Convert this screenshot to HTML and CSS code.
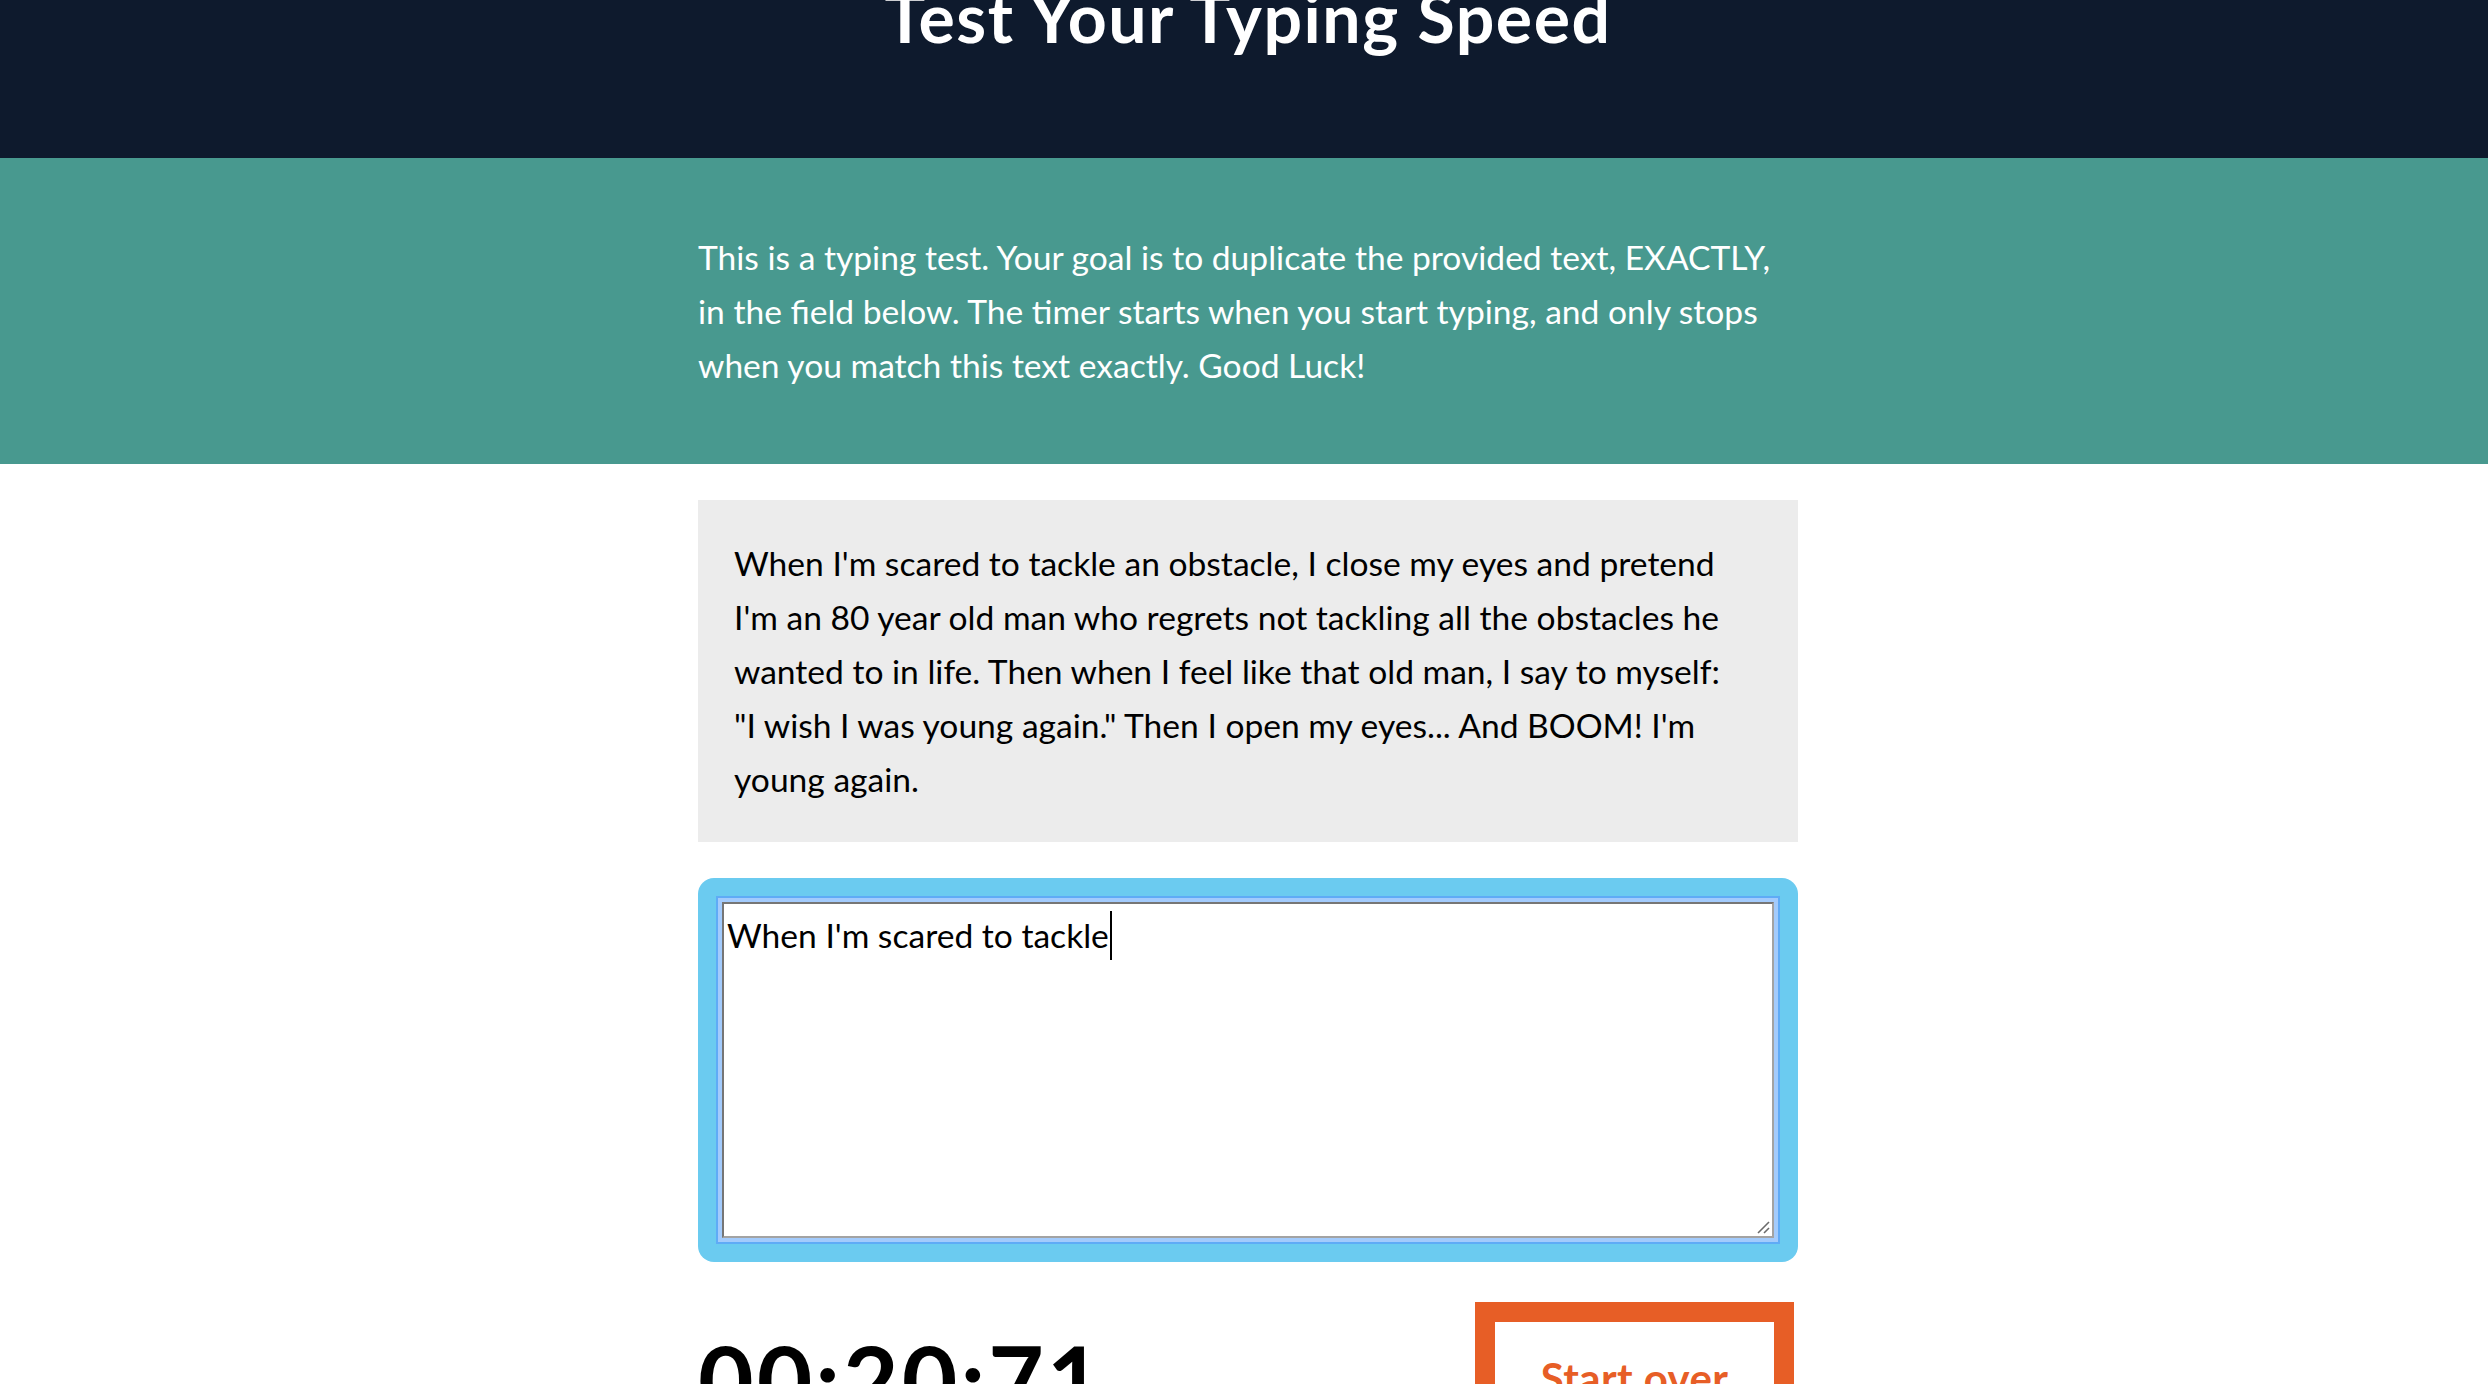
FILE: index.html
```html
<!DOCTYPE html>
<html lang="en">
<head>
<meta charset="utf-8">
<title>Test Your Typing Speed</title>
<link rel="stylesheet" href="styles.css">
</head>
<body>
<header class="masthead">
  <div class="inner">
    <h1 class="title">Test Your Typing Speed</h1>
  </div>
</header>
<section class="intro">
  <div class="inner">
    <p class="intro-text">This is a typing test. Your goal is to duplicate the provided text, EXACTLY, in the field below. The timer starts when you start typing, and only stops when you match this text exactly. Good Luck!</p>
  </div>
</section>
<main class="main">
  <div class="inner">
    <div class="origin-text">
      <p>When I'm scared to tackle an obstacle, I close my eyes and pretend I'm an 80 year old man who regrets not tackling all the obstacles he wanted to in life. Then when I feel like that old man, I say to myself: "I wish I was young again." Then I open my eyes... And BOOM! I'm young again.</p>
    </div>
    <div class="test-wrapper">
      <div class="test-area" role="textbox" aria-multiline="true"><span class="typed">When I'm scared to tackle</span><span class="caret"></span>
        <svg class="grip" width="14" height="14" viewBox="0 0 14 14" aria-hidden="true">
          <line x1="2" y1="13" x2="13" y2="2" stroke="#6b6b6b" stroke-width="1.6"/>
          <line x1="8" y1="13" x2="13" y2="8" stroke="#6b6b6b" stroke-width="1.6"/>
        </svg>
      </div>
    </div>
    <div class="meta">
      <div class="timer">00:20:71</div>
      <button class="reset" type="button">Start over</button>
    </div>
  </div>
</main>
</body>
</html>
```
FILE: styles.css
```css
html, body {
  margin: 0;
  padding: 0;
  background: #ffffff;
}

body {
  font-family: "Lato", "Noto Sans", sans-serif;
  color: #000;
  overflow: hidden;
  height: 1384px;
}

.inner {
  width: 1100px;
  margin: 0 auto;
}

.masthead,
.intro,
.main {
  padding-left: 8px;
}

/* Header */
.masthead {
  display: flow-root;
  background: #0e1a2d;
  height: 158px;
  box-sizing: border-box;
}

.masthead .inner {
  display: flow-root;
}

.title {
  margin: -17px 0 0;
  font-size: 68px;
  line-height: 68px;
  font-weight: 700;
  letter-spacing: 1.5px;
  color: #ffffff;
  text-align: center;
}

/* Intro */
.intro {
  background: #48998f;
  padding-top: 72px;
  padding-bottom: 72px;
}

.intro-text {
  margin: 0;
  color: #ffffff;
  font-size: 33.6px;
  line-height: 54px;
}

/* Main */
.main {
  padding-top: 36px;
}

.origin-text {
  background: #ececec;
  padding: 36px 60px 36px 36px;
}

.origin-text p {
  margin: 0;
  font-size: 33.6px;
  line-height: 54px;
  color: #000;
}

.test-wrapper {
  margin-top: 36px;
  background: #6bcbf0;
  border-radius: 16px;
  padding: 24px;
}

.test-area {
  position: relative;
  height: 336px;
  box-sizing: border-box;
  background: #ffffff;
  border-style: solid;
  border-width: 2px;
  border-color: #767676 #a3a3a3 #a3a3a3 #767676;
  box-shadow: 0 0 0 4px #a3cbfc, 0 0 0 6px #5fabf6;
  padding: 4px 3px;
  font-size: 33.6px;
  line-height: 54px;
  color: #000;
}

.caret {
  display: inline-block;
  width: 2px;
  height: 49px;
  background: #000;
  vertical-align: -12px;
  margin-left: 1px;
}

.grip {
  position: absolute;
  right: 2px;
  bottom: 2px;
}

.meta {
  display: flex;
  justify-content: space-between;
  align-items: flex-start;
  margin-top: 40px;
}

.timer {
  margin-top: 29px;
  font-size: 96px;
  line-height: 96px;
  font-weight: 700;
  letter-spacing: 3px;
  color: #000;
}

.reset {
  width: 319px;
  margin: 0 4px 0 0;
  padding: 25px 20px;
  border: 20px solid #e75e26;
  background: #ffffff;
  color: #e75e26;
  font-family: "Lato", "Noto Sans", sans-serif;
  font-size: 42px;
  line-height: 63px;
  font-weight: 700;
  letter-spacing: 0.4px;
  text-align: center;
  cursor: pointer;
}
```
